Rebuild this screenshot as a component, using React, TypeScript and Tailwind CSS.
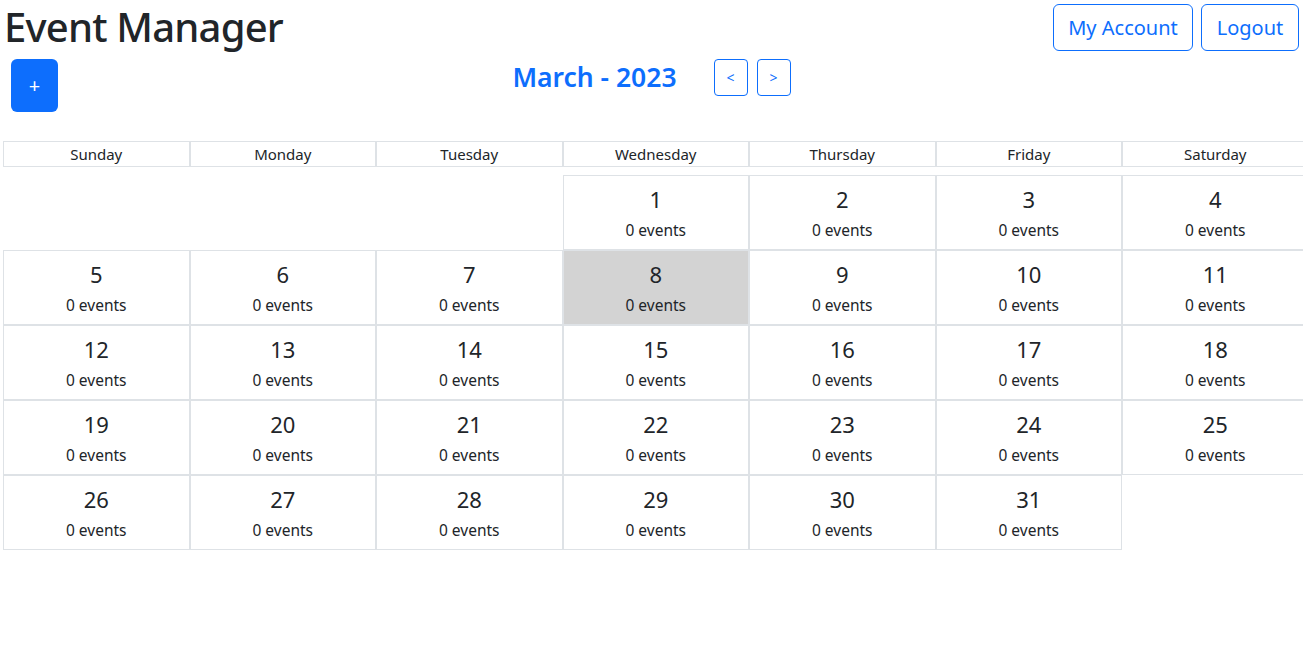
import React from 'react'

const days = ['Sunday', 'Monday', 'Tuesday', 'Wednesday', 'Thursday', 'Friday', 'Saturday']

// march 2023 starts on a wednesday
const cells: (number | null)[] = [null, null, null]
for (let d = 1; d <= 31; d++) cells.push(d)

const App = () => {
    return (
        <div className="min-h-[664px] bg-white text-[#212529]" style={{ fontFamily: '"Noto Sans", "Open Sans", sans-serif' }}>
            <div className="flex justify-between items-start">
                <h1 className="text-[40px] leading-[48px] font-medium pl-[4px] pt-[3px] tracking-[-0.8px]">Event Manager</h1>
                <div className="flex gap-[8px] mt-[4px] mr-[4px]">
                    <button className="h-[47px] w-[140px] border border-[#0d6efd] text-[#0d6efd] rounded-[6px] text-[20px]">My Account</button>
                    <button className="h-[47px] w-[98px] border border-[#0d6efd] text-[#0d6efd] rounded-[6px] text-[20px]">Logout</button>
                </div>
            </div>

            <div className="grid grid-cols-[1fr_auto_1fr] mt-[8px]">
                <div>
                    <button className="ml-[11px] w-[47px] h-[53px] bg-[#0d6efd] text-white rounded-[6px] text-[20px]">+</button>
                </div>
                <div className="flex items-center h-[37px]">
                    <span className="text-[26.5px] font-semibold text-[#0d6efd] mr-[37px]">March - 2023</span>
                    <button className="w-[34px] h-[37px] border border-[#0d6efd] text-[#0d6efd] rounded-[4px] text-[14px]">&lt;</button>
                    <button className="w-[34px] h-[37px] border border-[#0d6efd] text-[#0d6efd] rounded-[4px] text-[14px] ml-[9px]">&gt;</button>
                </div>
                <div></div>
            </div>

            <div className="ml-[3px] mt-[29px] grid grid-cols-[repeat(7,186.5px)]">
                {days.map(day => (
                    <div key={day} className="h-[26px] border border-[#dee2e6] text-[15px] flex items-center justify-center">
                        {day}
                    </div>
                ))}
            </div>

            <div className="ml-[3px] mt-[8px] grid grid-cols-[repeat(7,186.5px)]">
                {cells.map((d, i) => (
                    d === null ?
                        <div key={'e' + i} className="h-[75px]"></div>
                        :
                        <div
                            key={d}
                            className={`h-[75px] border border-[#dee2e6] flex flex-col items-center pt-[9px] ${d === 8 ? 'bg-[#d3d3d3]' : ''}`}
                        >
                            <span className="text-[22px] leading-[28px]">{d}</span>
                            <span className="text-[15.5px] leading-[22px] mt-[6px]">0 events</span>
                        </div>
                ))}
            </div>
        </div>
    )
}

export default App
